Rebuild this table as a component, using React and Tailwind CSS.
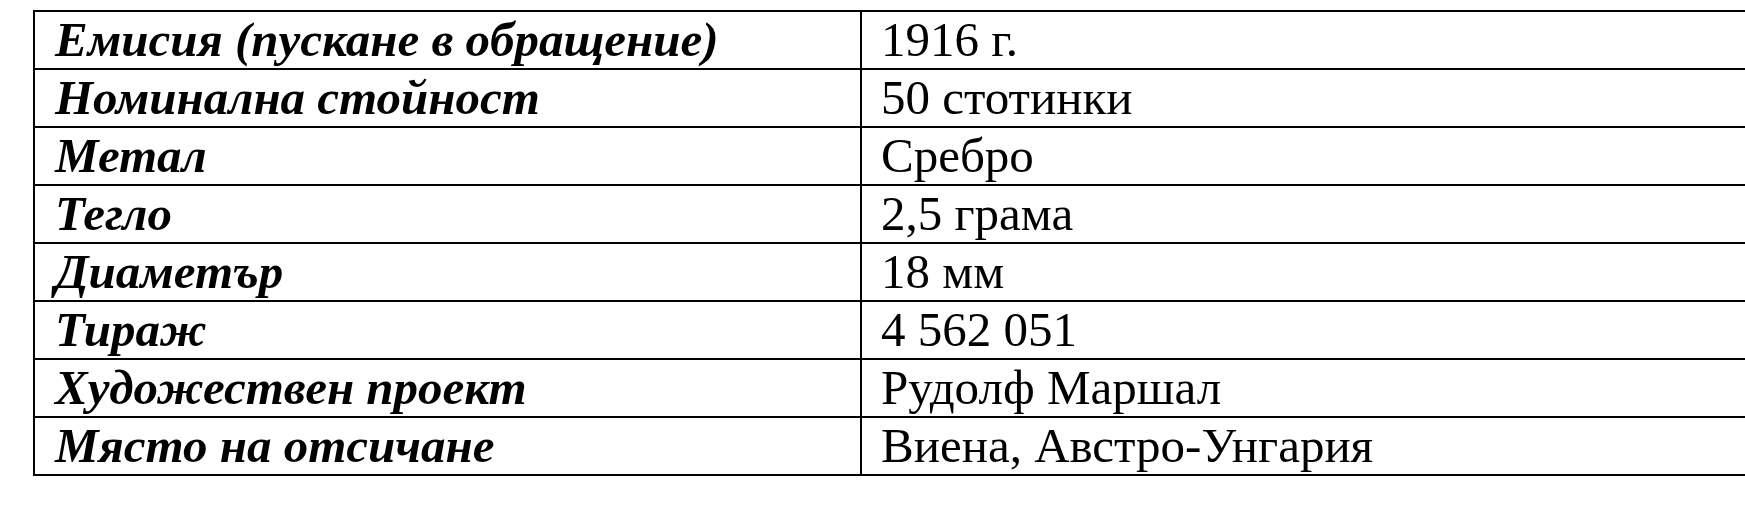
import React from "react";

const rows = [
  ["Емисия (пускане в обращение)", "1916 г."],
  ["Номинална стойност", "50 стотинки"],
  ["Метал", "Сребро"],
  ["Тегло", "2,5 грама"],
  ["Диаметър", "18 мм"],
  ["Тираж", "4 562 051"],
  ["Художествен проект", "Рудолф Маршал"],
  ["Място на отсичане", "Виена, Австро-Унгария"],
];

export default function App() {
  return (
    <div
      className="w-[1745px] h-[505px] overflow-hidden bg-white text-black pt-[10px] pl-[33px]"
      style={{ fontFamily: '"Liberation Serif", "Times New Roman", serif' }}
    >
      <div className="w-[1720px] border-2 border-black">
        {rows.map(([k, v], i) => (
          <div
            key={i}
            className={
              i < rows.length - 1
                ? "flex h-[58px] border-b-2 border-black"
                : "flex h-[56px]"
            }
          >
            <div className="w-[827px] shrink-0 border-r-2 border-black pl-[20px] text-[49px] leading-[56px] font-bold italic whitespace-nowrap">
              {k}
            </div>
            <div className="flex-1 pl-[19px] text-[49px] leading-[56px] whitespace-nowrap">
              {v}
            </div>
          </div>
        ))}
      </div>
    </div>
  );
}
